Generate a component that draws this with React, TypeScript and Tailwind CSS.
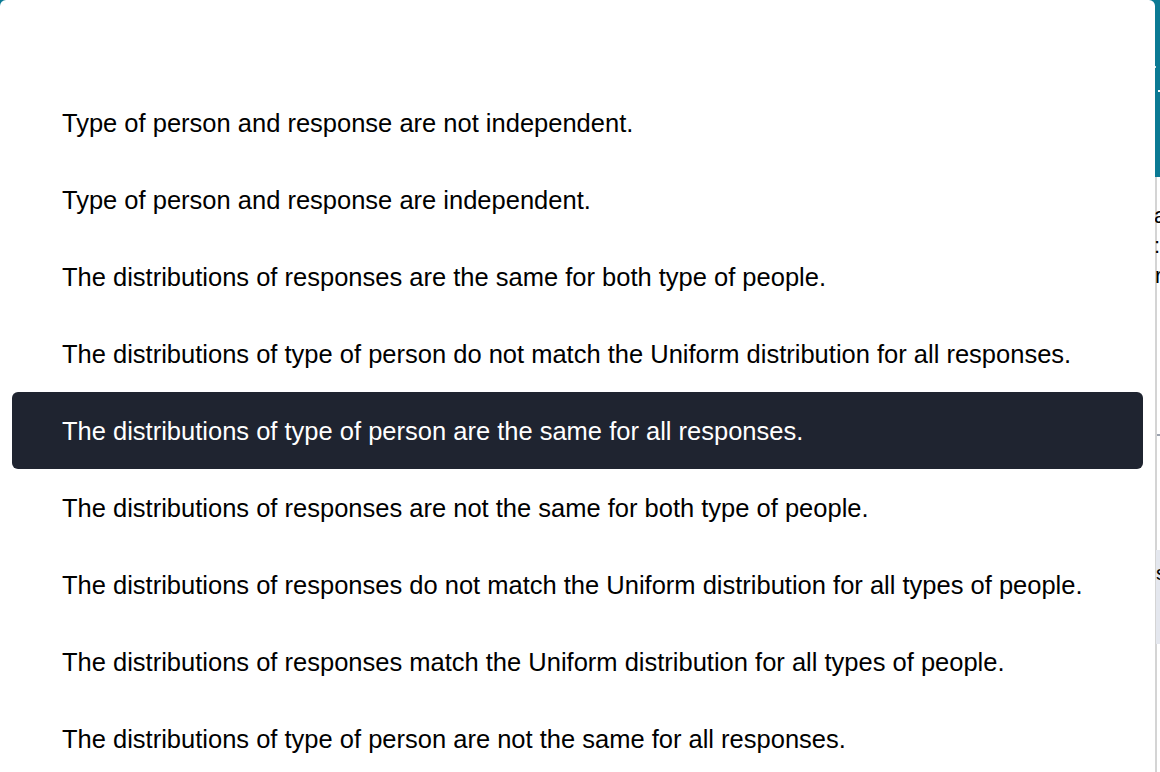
import React from 'react';

const OPTIONS = [
  'Type of person and response are not independent.',
  'Type of person and response are independent.',
  'The distributions of responses are the same for both type of people.',
  'The distributions of type of person do not match the Uniform distribution for all responses.',
  'The distributions of type of person are the same for all responses.',
  'The distributions of responses are not the same for both type of people.',
  'The distributions of responses do not match the Uniform distribution for all types of people.',
  'The distributions of responses match the Uniform distribution for all types of people.',
  'The distributions of type of person are not the same for all responses.',
];

const SELECTED = 4;

const App: React.FC = () => {
  return (
    <div className="relative w-[1160px] h-[772px] overflow-hidden bg-white font-['Liberation_Sans',Arial,sans-serif]">
      {/* page behind the dropdown */}
      <div className="flex flex-col h-full">
        <div className="h-[177px] bg-[#0b7a94] flex flex-col pl-[1152px] pt-[66px] gap-[22px]">
          <div className="h-[2px] w-[4px] bg-[#d7e6ea]"></div>
          <div className="h-[2px] w-[3px] ml-[6px] bg-white"></div>
        </div>
        <div className="flex-1 flex flex-col pl-[1155px]">
          <div className="flex-1 border-l-2 border-[#d4d4d4] flex flex-col text-[22px] leading-[30px] text-black">
            <div className="h-[24px]"></div>
            <span className="-ml-[3px]">a</span>
            <span className="-ml-[3px]">:</span>
            <span className="-ml-[2px]">r</span>
            <div className="h-[143px]"></div>
            <div className="h-[2px] bg-[#9ca3af]"></div>
            <div className="h-[114px]"></div>
            <div className="h-[94px] bg-[#e4e7ee] pt-[8px] text-[20px] -ml-[1px]">s</div>
          </div>
        </div>
      </div>

      {/* dropdown listbox */}
      <div className="absolute left-0 top-0 w-[1155px] h-[800px] bg-white rounded-md">
        <ul className="pt-[84px] px-3 flex flex-col">
          {OPTIONS.map((opt, i) => (
            <li
              key={opt}
              className={
                i === SELECTED
                  ? 'h-[77px] flex items-center pl-[50px] rounded-md bg-[#1f2430] text-white text-[25.5px] leading-[30px]'
                  : 'h-[77px] flex items-center pl-[50px] text-black text-[25.5px] leading-[30px]'
              }
            >
              {opt}
            </li>
          ))}
        </ul>
      </div>
    </div>
  );
};

export default App;
